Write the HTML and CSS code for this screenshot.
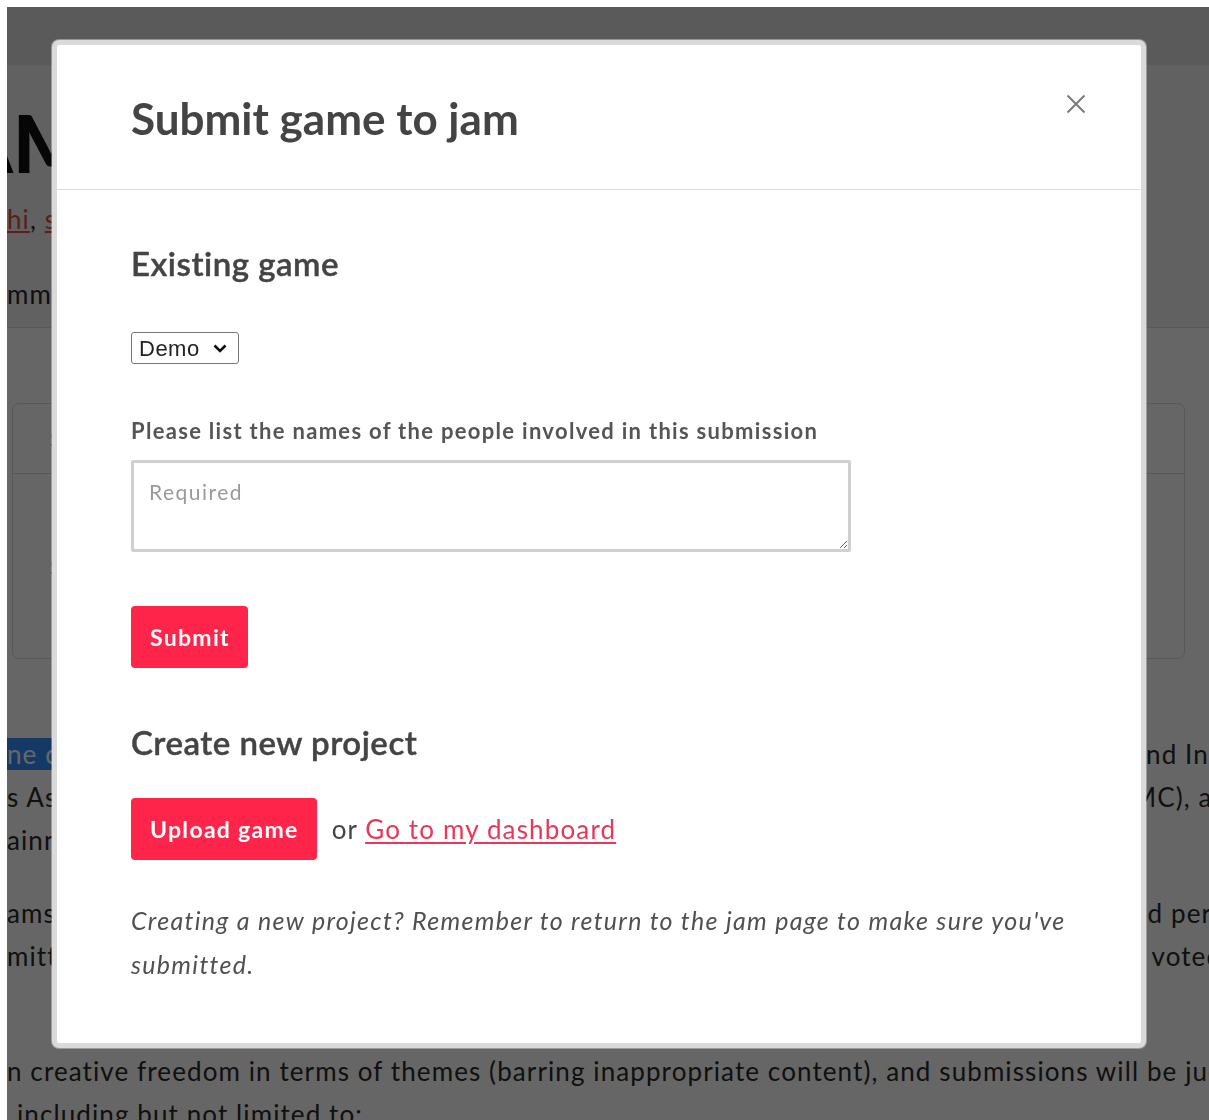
FILE: index.html
```html
<!DOCTYPE html>
<html lang="en">
<head>
<meta charset="utf-8">
<title>Submit game to jam</title>
<link rel="stylesheet" href="styles.css">
</head>
<body>
<div class="page">
  <header class="site-bar"></header>
  <section class="jam-header">
    <h1 class="jam-title">JAM</h1>
    <p class="hosts"><a href="#">hi</a>, <a href="#">sora</a></p>
    <p class="community">mmunity</p>
  </section>

  <div class="stats-card">
    <div class="stats-row stats-head"><span class="stat">Submissions</span></div>
    <div class="stats-row stats-body"><span class="stat">Starts in</span></div>
  </div>

  <div class="about">
    <div class="para">
      <div class="row"><span class="left"><mark>ne c</mark>ommunity</span><span class="right">and Indie</span></div>
      <div class="row"><span class="left">s Association</span><span class="right">MC), and</span></div>
      <div class="row"><span class="left">ainning</span><span class="right"></span></div>
    </div>
    <div class="para">
      <div class="row"><span class="left">ams</span><span class="right">nd period</span></div>
      <div class="row"><span class="left">mitted</span><span class="right">s voted</span></div>
    </div>
    <div class="para wide">
      <div class="row-full">n creative freedom in terms of themes (barring inappropriate content), and submissions will be judged</div>
      <div class="row-full indent">including but not limited to:</div>
    </div>
  </div>
</div>

<div class="backdrop"></div>

<div class="lightbox" role="dialog" aria-labelledby="lb-title">
  <button class="close-btn" type="button" aria-label="Close">
    <svg viewBox="0 0 20 20" width="20" height="20"><path d="M1.5 1.5 L18.5 18.5 M18.5 1.5 L1.5 18.5"/></svg>
  </button>
  <div class="lb-header">
    <h2 id="lb-title">Submit game to jam</h2>
  </div>
  <div class="lb-body">
    <h3 class="section-title">Existing game</h3>
    <span class="select-wrap">
      <select class="game-select">
        <option>Demo</option>
      </select>
      <svg class="select-arrow" viewBox="0 0 14 9" width="14" height="9"><path d="M1.5 1.5 L7 7 L12.5 1.5"/></svg>
    </span>
    <label class="field-label" for="people">Please list the names of the people involved in this submission</label>
    <textarea id="people" class="people-input" placeholder="Required"></textarea>
    <button class="btn submit-btn" type="button">Submit</button>

    <h3 class="section-title new-title">Create new project</h3>
    <div class="upload-row">
      <a class="btn" href="#">Upload game</a>
      <span class="or">or</span>
      <a class="dash-link" href="#">Go to my dashboard</a>
    </div>
    <p class="note">Creating a new project? Remember to return to the jam page to make sure you've submitted.</p>
  </div>
</div>
</body>
</html>
```

FILE: styles.css
```css
html, body {
  margin: 0;
  height: 100%;
}

body {
  padding: 7px 0 0 7px;
  box-sizing: border-box;
  background: #fff;
  overflow: hidden;
  font-family: Lato, "Liberation Sans", sans-serif;
}

/* ---------- jam page underneath ---------- */
.page {
  width: 1202px;
  height: 1113px;
  overflow: hidden;
  background: #fff;
  color: #2a2a2a;
  font-size: 26px;
  line-height: 43px;
  letter-spacing: 1.1px;
}

.site-bar {
  height: 58px;
  background: #e2e2e2;
}

.jam-header {
  height: 263px;
  box-sizing: border-box;
  padding-top: 37px;
  background: #f3f3f3;
  border-bottom: 1px solid #ddd;
}

.jam-title {
  margin: 0 0 0 -84px;
  font-size: 80px;
  line-height: 80px;
  font-weight: 900;
  letter-spacing: 0;
  color: #111;
}

.hosts {
  margin: 16px 0 0;
}

.hosts a {
  color: #ea4a4a;
  text-decoration: underline;
}

.community {
  margin: 32px 0 0;
}

.stats-card {
  margin: 75px 24px 0 5px;
  height: 254px;
  border: 1px solid #dcdcdc;
  border-radius: 7px;
  display: flex;
  flex-direction: column;
}

.stats-row {
  display: flex;
  align-items: center;
  padding-left: 37px;
  color: #d35400;
  font-size: 22px;
}

.stats-head {
  height: 69px;
  border-bottom: 1px solid #dcdcdc;
}

.stats-body {
  flex: 1;
}

.about {
  margin-top: 74px;
}

.para + .para {
  margin-top: 30px;
}

.para.wide {
  margin-top: 72px;
}

.row {
  display: grid;
  grid-template-columns: 1125px auto;
  white-space: nowrap;
}

.row .left {
  overflow: hidden;
}

.row-full {
  white-space: nowrap;
}

.row-full.indent {
  padding-left: 10px;
}

mark {
  background: #3390ff;
  color: #fff;
}

.backdrop {
  position: fixed;
  top: 7px;
  left: 7px;
  right: 0;
  bottom: 0;
  background: rgba(0, 0, 0, 0.6);
}

/* ---------- lightbox ---------- */
.lightbox {
  position: fixed;
  top: 40px;
  left: 52px;
  width: 1094px;
  box-sizing: border-box;
  background: #fff;
  border: 5px solid #dadada;
  border-radius: 7px;
  box-shadow: 0 0 0 1px rgba(255, 255, 255, 0.35);
  color: #444;
}

.close-btn {
  position: absolute;
  top: 49px;
  right: 55px;
  width: 20px;
  height: 20px;
  padding: 0;
  border: 0;
  background: none;
  cursor: pointer;
}

.close-btn svg {
  display: block;
  fill: none;
  stroke: #7a7a7a;
  stroke-width: 2;
}

.lb-header {
  padding: 47px 74px 44px;
  border-bottom: 1px solid #dedede;
}

.lb-header h2 {
  margin: 0;
  font-size: 44px;
  line-height: 1.2;
  font-weight: 700;
  color: #444;
}

.lb-body {
  padding: 0 50px 57px 74px;
}

.section-title {
  margin: 54px 0 0;
  font-size: 33px;
  line-height: 1.2;
  font-weight: 600;
  letter-spacing: 0.5px;
  color: #444;
  -webkit-text-stroke: 0.4px #444;
}

/* native select with a drawn chevron */
.select-wrap {
  position: relative;
  display: block;
  width: 108px;
  margin-top: 49px;
}

.game-select {
  display: block;
  width: 108px;
  height: 32px;
  padding: 0 0 0 7px;
  -webkit-appearance: none;
  appearance: none;
  font-family: "Liberation Sans", Arial, sans-serif;
  font-size: 22px;
  letter-spacing: 0.5px;
  color: #222;
  background: #fff;
  border: 1px solid #767676;
  border-radius: 3px;
}

.select-arrow {
  position: absolute;
  top: 12px;
  left: 82px;
  fill: none;
  stroke: #111;
  stroke-width: 2.6;
  pointer-events: none;
}

.field-label {
  display: block;
  margin-top: 54px;
  font-size: 22px;
  line-height: 1.2;
  font-weight: 700;
  letter-spacing: 1.3px;
  color: #555;
}

.people-input {
  display: block;
  margin-top: 15px;
  width: 720px;
  height: 92px;
  box-sizing: border-box;
  padding: 16px 15px;
  border: 3px solid #d0d0d0;
  border-radius: 2px;
  font-family: Lato, "Liberation Sans", sans-serif;
  font-size: 21px;
  letter-spacing: 1.5px;
  color: #333;
  resize: vertical;
}

.people-input::placeholder {
  color: #9a9a9a;
}

.btn {
  display: inline-flex;
  align-items: center;
  height: 62px;
  box-sizing: border-box;
  padding: 0 18px 0 19px;
  border: 0;
  border-radius: 4px;
  background: #ff2449;
  color: #fff;
  font-family: Lato, "Liberation Sans", sans-serif;
  font-size: 23px;
  font-weight: 700;
  letter-spacing: 1.3px;
  text-decoration: none;
  cursor: pointer;
}

.submit-btn {
  display: flex;
  margin-top: 54px;
}

.new-title {
  margin-top: 55px;
}

.upload-row {
  display: flex;
  align-items: center;
  margin-top: 36px;
  font-size: 26px;
  letter-spacing: 1.15px;
}

.or {
  margin-left: 15px;
  color: #444;
}

.dash-link {
  margin-left: 7px;
  color: #e8385a;
  text-decoration: underline;
  text-underline-offset: 3px;
}

.note {
  margin: 38px 0 0;
  font-size: 25px;
  line-height: 44px;
  font-style: italic;
  letter-spacing: 1.3px;
  color: #505050;
}
```
